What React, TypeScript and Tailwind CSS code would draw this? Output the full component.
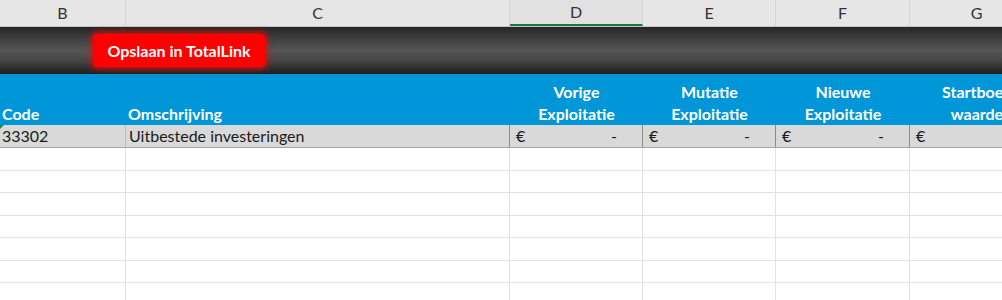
import React from 'react';

const cols = [
  { key: 'B', w: 'w-[126px]' },
  { key: 'C', w: 'w-[384px]' },
  { key: 'D', w: 'w-[133px]' },
  { key: 'E', w: 'w-[133px]' },
  { key: 'F', w: 'w-[134px]' },
  { key: 'G', w: 'w-[134px]' },
];

const headers: React.ReactNode[] = [
  <>Code</>,
  <>Omschrijving</>,
  <>Vorige<br />Exploitatie</>,
  <>Mutatie<br />Exploitatie</>,
  <>Nieuwe<br />Exploitatie</>,
  <>Startboek<br />waarde</>,
];

// lege rijen onder de data
const emptyRows = [23, 22, 23, 22, 23, 22, 23];

export default function App() {
  return (
    <div
      className="w-[1002px] h-[300px] overflow-hidden bg-white"
      style={{ fontFamily: 'Lato, "Open Sans", sans-serif' }}
    >
      <div className="w-[1044px]">
        {/* kolomletters */}
        <div className="flex h-[27px] bg-[#e6e6e6] border-b border-[#c6c6c6]">
          {cols.map((c, i) => (
            <div
              key={c.key}
              className={`${c.w} shrink-0 flex items-center justify-center text-[16px] text-[#333] border-r border-[#d4d4d4] ${
                i === 2 ? 'border-b-2 border-b-[#217346] bg-[#e1e1e1]' : ''
              }`}
            >
              {c.key}
            </div>
          ))}
        </div>

        {/* balk met knop */}
        <div className="h-[47px] flex items-center bg-[linear-gradient(to_bottom,#262626_0%,#3f3f3f_25%,#555555_50%,#474747_70%,#1e1e1e_100%)]">
          <div className="ml-[93px] w-[172px] h-[33px] rounded-[4px] bg-[#ff0000] shadow-[0_0_6px_2px_rgba(255,0,0,0.8)] flex items-center justify-center text-white font-bold text-[16px]">
            Opslaan in TotalLink
          </div>
        </div>

        {/* blauwe kopregel */}
        <div className="flex h-[51px] bg-[#0096d8] text-white font-bold text-[16px] leading-[22px]">
          {cols.map((c, i) => (
            <div
              key={c.key}
              className={`${c.w} shrink-0 flex items-end ${
                i < 2 ? 'justify-start pl-[2px]' : 'justify-center text-center'
              }`}
            >
              <div>{headers[i]}</div>
            </div>
          ))}
        </div>

        {/* datarij */}
        <div className="flex h-[23px] bg-[#d9d9d9] border-b border-[#a6a6a6] text-[16px] text-[#1a1a1a]">
          <div className="w-[126px] shrink-0 relative flex items-center pl-[2px] border-r border-[#bdbdbd]">
            <div className="absolute left-0 top-0 w-0 h-0 border-t-[4px] border-r-[4px] border-t-[#1e8c3c] border-r-transparent" />
            33302
          </div>
          <div className="w-[384px] shrink-0 flex items-center pl-[3px] border-r border-[#8c8c8c]">
            Uitbestede investeringen
          </div>
          {cols.slice(2).map((c) => (
            <div
              key={c.key}
              className={`${c.w} shrink-0 flex items-center justify-between pl-[6px] pr-[25px] border-r border-[#8c8c8c]`}
            >
              <span>€</span>
              <span>-</span>
            </div>
          ))}
        </div>

        {emptyRows.map((h, r) => (
          <div
            key={r}
            className={`flex border-b border-[#e2e2e2] ${h === 23 ? 'h-[23px]' : 'h-[22px]'}`}
          >
            {cols.map((c) => (
              <div key={c.key} className={`${c.w} shrink-0 border-r border-[#e2e2e2]`} />
            ))}
          </div>
        ))}
      </div>
    </div>
  );
}
